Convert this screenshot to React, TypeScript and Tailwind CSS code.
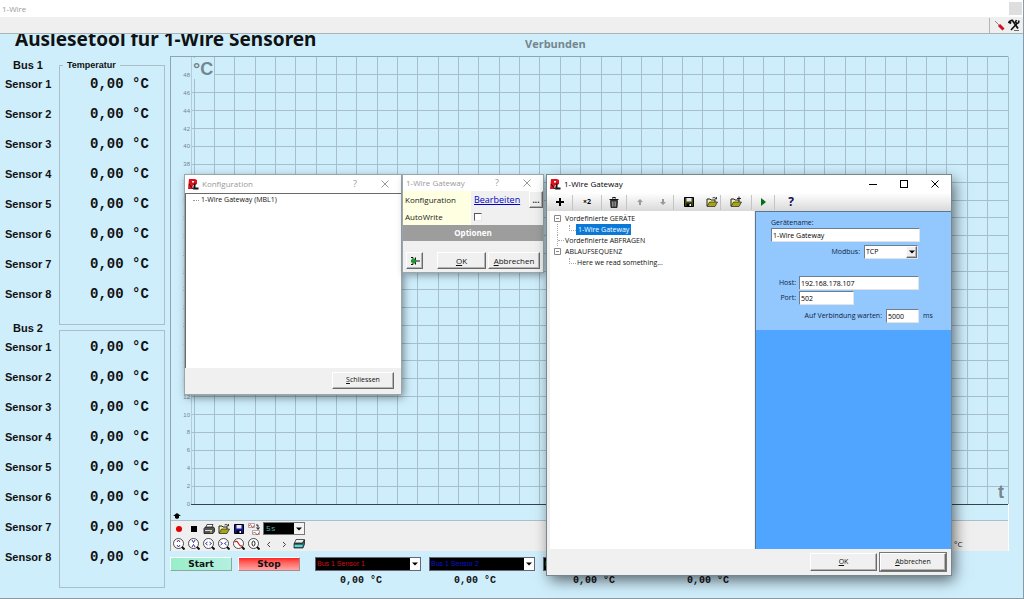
import type { ReactNode } from 'react';

const sensors = [1, 2, 3, 4, 5, 6, 7, 8];
const ticks = Array.from({ length: 25 }, (_, i) => i * 2);
const columns = Array.from({ length: 41 }, (_, i) => i);

const raised =
  'border border-t-white border-l-white border-r-[#696969] border-b-[#696969] bg-[#f0f0f0] shadow-[inset_-1px_-1px_0_#b4b4b4]';
const field =
  'border border-t-[#6c7f92] border-l-[#6c7f92] border-r-[#e3e3e3] border-b-[#e3e3e3] bg-white text-black px-px h-[14px] min-w-0 outline-none';

const Logo = () => (
  <svg viewBox="0 0 12 12" className="w-3 h-3 shrink-0">
    <path d="M2 1h6l2 1v4L8 7H6l-1 4H1z" fill="#e01018" />
    <path d="M5 3h2v1.500H5z" fill="#fff" />
    <path d="M7 5.500h1.500V9.500H11.500V11.500H6z" fill="#151515" />
    <path d="M2 6l4 5" stroke="#151515" strokeWidth="1" />
  </svg>
);

const CloseIcon = () => (
  <svg viewBox="0 0 8 8" className="w-2 h-2" fill="none" stroke="currentColor">
    <path d="M0.500 0.500l7 7M7.500 0.500l-7 7" />
  </svg>
);

const Arrow = () => (
  <svg viewBox="0 0 6 4" className="w-[6px] h-1" fill="#000">
    <path d="M0 0.500h6L3 3.500z" />
  </svg>
);

const Folder = ({ children }: { children?: ReactNode }) => (
  <svg viewBox="0 0 12 12" className="w-3 h-3">
    <path d="M1 10V3h3l1 1h4v2" fill="#f5f0a0" stroke="#222" />
    <path d="M1 10.500L3.500 6h8L9 10.500z" fill="#a8a418" stroke="#222" strokeWidth="0.700" />
    {children ?? <path d="M6.500 2q2-1.500 3.500 0.500M10.500 1v2h-2" fill="none" stroke="#111" strokeWidth="0.800" />}
  </svg>
);

const Floppy = ({ color }: { color: string }) => (
  <svg viewBox="0 0 12 12" className="w-3 h-3">
    <path d="M1.500 1.500h9v9h-9z" fill={color} stroke="#000" />
    <path d="M3.500 2h5v3.500h-5z" fill="#e8e8f0" />
    <path d="M3.500 7.500h5v3h-5z" fill="#000" />
    <path d="M6.500 8h1.500v2H6.500z" fill="#fff" />
  </svg>
);

const Lens = ({ children }: { children: ReactNode }) => (
  <svg viewBox="0 0 12 12" className="w-3 h-3" fill="none">
    <circle cx="5.500" cy="5.500" r="5" fill="#fff" stroke="#222" strokeWidth="0.800" />
    <path d="M9 9l2.500 2.500" stroke="#111" strokeWidth="2" />
    {children}
  </svg>
);

const chartTools = [
  { label: 'Aufnahme', icon: <svg viewBox="0 0 12 12" className="w-3 h-3"><circle cx="6" cy="6" r="3" fill="#e00000" /></svg> },
  { label: 'Anhalten', icon: <svg viewBox="0 0 12 12" className="w-3 h-3"><path d="M3 3h6v6H3z" /></svg> },
  {
    label: 'Drucken',
    icon: (
      <svg viewBox="0 0 12 12" className="w-3 h-3">
        <path d="M4 1.500h6L8.500 5h-6z" fill="#fff" stroke="#222" strokeWidth="0.800" />
        <path d="M1 5.500L2.500 4h8l1 1.500v3L10 10.500H1z" fill="#555" stroke="#111" strokeWidth="0.800" />
        <path d="M2 7.500h7" stroke="#ddd" />
        <path d="M7 9h2" stroke="#d8d830" />
      </svg>
    ),
  },
  { label: 'Laden', icon: <Folder /> },
  { label: 'Speichern', icon: <Floppy color="#1818a0" /> },
  {
    label: 'Kurven',
    icon: (
      <svg viewBox="0 0 12 12" className="w-3 h-3" fill="none">
        <path d="M0.500 0.500h6v4h-6zM4.500 7.500h7v4h-7z" fill="#fff" stroke="#888" strokeWidth="0.700" />
        <path d="M1 3q1.500-3 2.500 0t2.500-0.500M5 10.500q1.500-3 3 0t3-1" stroke="#c02020" strokeWidth="0.800" />
        <path d="M8 2h2v4M8.500 4.500l1.500 2 1.500-2" stroke="#111" strokeWidth="0.900" />
      </svg>
    ),
  },
];

const zoomTools = [
  { label: 'Y vergrößern', icon: <Lens><path d="M4 4l1.500-2L7 4M4 7l1.500 2L7 7" stroke="#2020a0" strokeWidth="0.900" /></Lens> },
  { label: 'Y verkleinern', icon: <Lens><path d="M4 2l1.500 2.500L7 2M4 9l1.500-2.500L7 9" stroke="#2020a0" strokeWidth="0.900" /></Lens> },
  { label: 'X vergrößern', icon: <Lens><path d="M4.500 4L2.500 5.500l2 1.500M6.500 4l2 1.500-2 1.500" stroke="#2020a0" strokeWidth="0.900" /></Lens> },
  { label: 'X verkleinern', icon: <Lens><path d="M2.500 4l2 1.500-2 1.500M8.500 4l-2 1.500 2 1.500" stroke="#2020a0" strokeWidth="0.900" /></Lens> },
  { label: 'Bereich', icon: <Lens><path d="M1.500 4q2-2 4 1.500t3.500 2" stroke="#d02020" strokeWidth="1.200" /></Lens> },
  { label: 'Zurücksetzen', icon: <Lens><ellipse cx="5.500" cy="5.500" rx="1.500" ry="2.500" stroke="#222" /></Lens> },
  { label: 'Zurück', icon: <svg viewBox="0 0 12 12" className="w-3 h-3" fill="none" stroke="#444"><path d="M7 4L4.500 6.500 7 9" /></svg> },
  { label: 'Weiter', icon: <svg viewBox="0 0 12 12" className="w-3 h-3" fill="none" stroke="#444"><path d="M5 4l2.500 2.500L5 9" /></svg> },
  {
    label: 'Löschen',
    icon: (
      <svg viewBox="0 0 12 12" className="w-3 h-3">
        <path d="M3 1.500h8.500L9.500 5h-8z" fill="#eee" stroke="#111" strokeWidth="0.700" />
        <path d="M1 5.500h8.500L11.500 2v4L10 10H1z" fill="#108080" stroke="#111" strokeWidth="0.700" />
        <path d="M1.500 8h8" stroke="#fff" />
      </svg>
    ),
  },
];

const channels = [
  { label: 'Bus 1 Sensor 1', style: 'text-[#d01010]' },
  { label: 'Bus 1 Sensor 2', style: 'text-[#1010d0]' },
  { label: 'Bus 1 Sensor 3', style: 'text-[#10a010]' },
  { label: 'Bus 1 Sensor 4', style: 'text-[#c0c010]' },
];

const SensorNames = ({ bus }: { bus: number }) => (
  <div className="h-[263px]">
    <h2 className="h-[18px] leading-[18px] pl-[13px]">Bus {bus}</h2>
    <ul className="flex flex-col gap-[10px] pl-[5px]">
      {sensors.map((n) => (
        <li key={n} className="h-5 leading-5">Sensor {n}</li>
      ))}
    </ul>
  </div>
);

const SensorValues = () => (
  <ul className="flex flex-col gap-[10px] pl-[30px] font-['Liberation_Mono',monospace] text-[14px] whitespace-pre">
    {sensors.map((n) => (
      <li key={n} className="h-5 leading-5">0,00 °C</li>
    ))}
  </ul>
);

const Chart = () => (
  <div className="flex h-[447px] font-['Liberation_Sans',sans-serif]">
    <svg className="w-[23px] h-full shrink-0 overflow-visible">
      {ticks.map((t) => (
        <text key={t} x="19" y={`${100 - t * 2}%`} dy="2" textAnchor="end" fontSize="6" fill="#71858f">{t}</text>
      ))}
    </svg>
    <svg className="flex-1 h-full overflow-visible" shapeRendering="crispEdges">
      {ticks.map((t) => (
        <line key={t} x1="-3" x2="100%" y1={`${100 - t * 2}%`} y2={`${100 - t * 2}%`} stroke="#a6bfcb" />
      ))}
      {columns.map((c) => (
        <line key={c} x1={`${c * 2.5}%`} x2={`${c * 2.5}%`} y1="0" y2="100%" stroke="#a6bfcb" />
      ))}
      <line x1="-3" x2="-3" y1="0" y2="100%" stroke="#b5cbd6" />
      <line x1="-3" x2="100%" y1="100%" y2="100%" stroke="#34444c" />
      <rect x="-2" y="1" width="22" height="21" fill="#cfeefc" />
      <text x="-1" y="18" fontSize="18" fontWeight="bold" fill="#74868e">°C</text>
      <text x="100%" dx="-10" y="441" fontSize="18" fontWeight="bold" fill="#74868e">t</text>
    </svg>
  </div>
);

const KonfigurationDialog = () => (
  <section className="absolute left-[185px] top-[175px] w-[216px] bg-[#f0f0f0] outline outline-[#9aa6ac] shadow-[2px_3px_9px_rgba(0,0,0,0.5)]">
    <header className="flex items-center h-[18px] bg-white text-[#999] pl-[2px] pr-3">
      <Logo />
      <h2 className="flex-1 pl-[3px] text-[8px]">Konfiguration</h2>
      <button aria-label="Hilfe" className="w-4 mr-[18px] text-[9px]">?</button>
      <button aria-label="Schließen"><CloseIcon /></button>
    </header>
    <ul className="h-[175px] bg-white border-t border-l border-[#696969] pt-px pl-[7px]">
      <li className="flex items-center gap-[2px] h-[11px]">
        <span className="w-[6px] border-t border-dotted border-[#999]" />1-Wire Gateway (MBL1)
      </li>
    </ul>
    <footer className="flex justify-end h-[26px] pt-1 pr-[7px]">
      <button className={`w-[62px] h-[17px] ${raised}`}><u>S</u>chliessen</button>
    </footer>
  </section>
);

const GatewayOptions = () => (
  <section className="absolute left-[403px] top-[175px] w-[140px] bg-[#f0f0f0] outline outline-[#9aa6ac] shadow-[2px_3px_8px_rgba(0,0,0,0.4)] text-[8px]">
    <header className="flex items-center h-4 bg-white text-[#999] pl-[3px] pr-3">
      <h2 className="flex-1">1-Wire Gateway</h2>
      <button aria-label="Hilfe" className="w-4 mr-[18px] text-[9px]">?</button>
      <button aria-label="Schließen"><CloseIcon /></button>
    </header>
    <div className="grid grid-cols-[68px_1fr] leading-[17px] text-[#222]">
      <span className="bg-[#ffffe1] pl-[2px]">Konfiguration</span>
      <span className="flex justify-between pl-[3px]">
        <a href="#bearbeiten" className="text-[#0000c8] underline text-[9px]">Bearbeiten</a>
        <button aria-label="Mehr" className={`w-[14px] h-[17px] leading-[10px] font-bold ${raised}`}>...</button>
      </span>
      <label htmlFor="autowrite" className="bg-[#ffffe1] pl-[2px]">AutoWrite</label>
      <span className="flex items-center pl-[3px]">
        <input id="autowrite" type="checkbox" className="appearance-none w-2 h-2 bg-white border border-t-[#555] border-l-[#555] border-r-[#e8e8e8] border-b-[#e8e8e8]" />
      </span>
    </div>
    <h3 className="h-4 leading-4 bg-[#9d9d9d] text-white text-center font-bold">Optionen</h3>
    <footer className="flex items-center h-[31px] pt-2 px-[3px] gap-[2px]">
      <button aria-label="Eingang" className={`flex items-center justify-center w-[17px] h-[17px] mr-3 ${raised}`}>
        <svg viewBox="0 0 10 10" className="w-[10px] h-[10px]">
          <path d="M1 1.500h2v7H1M5.500 1.500v7M5.500 5H10" fill="none" stroke="#111" />
          <path d="M1 3.500h3V2l3 3-3 3V6.500H1z" fill="#10a020" />
        </svg>
      </button>
      <button className={`flex-1 h-[17px] ${raised}`}><u>O</u>K</button>
      <button className={`w-[52px] h-[17px] whitespace-nowrap ${raised}`}><u>A</u>bbrechen</button>
    </footer>
  </section>
);

const Separator = () => <span className="w-px h-[15px] bg-[#c4c4c4]" />;

const TreeBox = () => (
  <svg viewBox="0 0 7 7" className="w-[7px] h-[7px] shrink-0" fill="#fff" stroke="#888">
    <path d="M0.500 0.500h6v6h-6zM2 3.500h3" />
  </svg>
);

const GatewayToolbar = () => (
  <div className="flex items-center h-[18px] bg-linear-to-b from-white to-[#d9d9d9] text-black">
    <button aria-label="Hinzufügen" className="flex justify-center w-[25px]">
      <svg viewBox="0 0 10 10" className="w-[10px] h-[10px]" stroke="#000" strokeWidth="2"><path d="M5 1v8M1 5h8" /></svg>
    </button>
    <Separator />
    <button className="w-[28px] font-bold">×2</button>
    <Separator />
    <button aria-label="Löschen" className="flex justify-center w-[24px]">
      <svg viewBox="0 0 12 12" className="w-3 h-3">
        <path d="M2.500 4.500h7L9 11.500H3z" fill="#444" stroke="#111" strokeWidth="0.800" />
        <path d="M4.500 5.500v5M6 5.500v5M7.500 5.500v5" stroke="#bbb" strokeWidth="0.600" />
        <path d="M1.500 3.500h9M4.500 2.500l0.500-1h2l0.500 1" fill="none" stroke="#111" strokeWidth="1.200" />
      </svg>
    </button>
    <Separator />
    <button aria-label="Nach oben" className="flex justify-center w-[26px]">
      <svg viewBox="0 0 6 6" className="w-[6px] h-[6px]" fill="#999"><path d="M3 0l3 3H4v3H2V3H0z" /></svg>
    </button>
    <button aria-label="Nach unten" className="flex justify-center w-[20px]">
      <svg viewBox="0 0 6 6" className="w-[6px] h-[6px]" fill="#999"><path d="M3 6l3-3H4V0H2v3H0z" /></svg>
    </button>
    <Separator />
    <button aria-label="Speichern" className="flex justify-center w-[30px]"><Floppy color="#4a4a10" /></button>
    <button aria-label="Öffnen" className="flex justify-center w-4"><Folder /></button>
    <Separator />
    <button aria-label="Importieren" className="flex justify-center w-[30px]">
      <Folder><path d="M9 0.500v4M7 2.500h4" stroke="#111" strokeWidth="0.900" /></Folder>
    </button>
    <Separator />
    <button aria-label="Ausführen" className="flex justify-center w-[22px]">
      <svg viewBox="0 0 8 8" className="w-2 h-2"><path d="M2 0l5 4-5 4z" fill="#007010" /></svg>
    </button>
    <Separator />
    <button aria-label="Hilfe" className="w-8 text-[12px] font-bold text-[#101060]">?</button>
  </div>
);

const GatewayTree = () => (
  <ul className="w-[204px] pt-[2px] pl-1 bg-white leading-[11px] whitespace-nowrap">
    <li>
      <span className="flex items-center gap-1"><TreeBox />Vordefinierte GERÄTE</span>
      <ul className="ml-[3px] pl-[11px] border-l border-dotted border-[#aaa]">
        <li className="flex items-center">
          <span className="w-[7px] h-[6px] mb-1 border-l border-b border-dotted border-[#aaa]" />
          <span className="px-[2px] bg-[#0a78d7] text-white">1-Wire Gateway</span>
        </li>
      </ul>
    </li>
    <li className="flex items-center ml-[3px] border-l border-dotted border-[#aaa]">
      <span className="w-[6px] mr-px border-t border-dotted border-[#aaa]" />Vordefinierte ABFRAGEN
    </li>
    <li>
      <span className="flex items-center gap-1"><TreeBox />ABLAUFSEQUENZ</span>
      <ul className="pl-[15px]">
        <li className="flex items-center gap-px">
          <span className="w-[7px] h-[6px] mb-1 border-l border-b border-dotted border-[#aaa]" />Here we read something...
        </li>
      </ul>
    </li>
  </ul>
);

const GatewayForm = () => (
  <form className="flex-1 flex flex-col bg-[#4fa5ff] border-l border-t border-[#5b7690] text-[#10243c]">
    <div className="h-[118px] bg-[#93c8ff] pt-[6px] pl-[15px]">
      <label htmlFor="name" className="block h-[10px] leading-[10px]">Gerätename:</label>
      <input id="name" defaultValue="1-Wire Gateway" className={`block w-[149px] ${field}`} />
      <div className="flex items-center justify-end gap-1 w-[147px] mt-[3px]">
        <label htmlFor="modbus">Modbus:</label>
        <span className="relative">
          <select id="modbus" className={`appearance-none block w-[54px] ${field}`}>
            <option>TCP</option>
            <option>RTU</option>
          </select>
          <span className={`absolute right-px top-px flex items-center justify-center w-[11px] h-3 pointer-events-none ${raised}`}><Arrow /></span>
        </span>
      </div>
      <div className="grid grid-cols-[25px_1fr] items-center gap-x-[3px] gap-y-px w-[148px] mt-[17px]">
        <label htmlFor="host" className="text-right">Host:</label>
        <input id="host" defaultValue="192.168.178.107" className={field} />
        <label htmlFor="port" className="text-right">Port:</label>
        <input id="port" defaultValue="502" className={`w-[55px] ${field}`} />
      </div>
      <div className="flex items-center gap-1 mt-1 pl-[33px]">
        <label htmlFor="wait" className="flex-none whitespace-nowrap w-[78px] text-right">Auf Verbindung warten:</label>
        <input id="wait" defaultValue="5000" className={`w-[33px] ${field}`} />
        <span>ms</span>
      </div>
    </div>
  </form>
);

const GatewayDialog = () => (
  <section className="absolute left-[547px] top-[175px] w-[404px] bg-[#f0f0f0] outline outline-[#78868e] shadow-[3px_5px_14px_rgba(0,0,0,0.6)]">
    <header className="flex items-center h-[18px] bg-white text-black pl-[2px] pr-3">
      <Logo />
      <h2 className="flex-1 pl-[3px] text-[8px]">1-Wire Gateway</h2>
      <div className="flex items-center gap-[23px]">
        <button aria-label="Minimieren" className="w-2 h-px bg-black" />
        <button aria-label="Maximieren" className="w-2 h-2 border border-black" />
        <button aria-label="Schließen"><CloseIcon /></button>
      </div>
    </header>
    <GatewayToolbar />
    <div className="flex h-[338px] gap-px pl-[3px]">
      <GatewayTree />
      <GatewayForm />
    </div>
    <footer className="flex justify-end gap-[3px] pt-1 pb-1 pr-[5px]">
      <button className={`w-[67px] h-[18px] ${raised}`}><u>O</u>K</button>
      <button className={`w-[66px] h-[18px] outline outline-[#777] ${raised}`}><u>A</u>bbrechen</button>
    </footer>
  </section>
);

const App = () => (
  <div className="relative flex flex-col min-h-screen bg-[#cfeefc] border-b border-r border-[#8a9ba4] font-['Open_Sans','Noto_Sans',sans-serif] text-[7px] text-[#111] overflow-hidden">
    <header className="flex items-center justify-between h-[17px] bg-white text-[#999] text-[8px] pl-[2px] pr-px">
      <h1>1-Wire</h1>
      <button aria-label="Schließen" className="w-[13px] h-[13px] bg-[#dedede]" />
    </header>
    <div className="flex justify-end items-center gap-[3px] h-[17px] bg-[#efefef] border-b border-[#a8b4ba] pr-[3px]">
      <span className="w-px h-[15px] bg-[#b4b4b4]" />
      <button aria-label="Werkzeug">
        <svg viewBox="0 0 12 12" className="w-3 h-3" fill="none">
          <path d="M2 2l4 4" stroke="#888" />
          <path d="M6 6l4.500 4.500" stroke="#d01020" strokeWidth="3" />
        </svg>
      </button>
      <button aria-label="Einstellungen">
        <svg viewBox="0 0 12 12" className="w-3 h-3" fill="none" stroke="#111">
          <path d="M0.500 4q1.500-3 4-2.500l5.500 8M1 2.500l2 2" strokeWidth="1.800" />
          <path d="M10.500 1.500q1 2.500-1.500 3L3 11M8.500 1l-1 2 1.500 1.500" strokeWidth="1.600" />
          <path d="M6 11.500h5" strokeWidth="0.600" />
        </svg>
      </button>
    </div>

    <div className="flex h-[22px] overflow-hidden font-bold">
      <h1 className="w-[525px] pl-[15px] -mt-[9px] text-[19px] leading-7 whitespace-nowrap font-['Noto_Sans',sans-serif]">Auslesetool für 1-Wire Sensoren</h1>
      <p className="text-[11px] leading-5 text-[#74868e] font-['Open_Sans',sans-serif]">Verbunden</p>
    </div>

    <div className="flex">
      <aside className="flex w-[170px] shrink-0 font-bold font-['Liberation_Sans',sans-serif] text-[11px] whitespace-nowrap">
        <div className="w-[59px]">
          <SensorNames bus={1} />
          <SensorNames bus={2} />
        </div>
        <div className="w-[106px]">
          <fieldset className="h-[269px] border border-[#a9bfca]">
            <legend className="h-[18px] leading-[18px] ml-[3px] px-1 text-[9px]">Temperatur</legend>
            <SensorValues />
          </fieldset>
          <fieldset className="h-[258px] mt-[5px] pt-[6px] border border-[#a9bfca]">
            <SensorValues />
          </fieldset>
        </div>
      </aside>

      <main className="flex-1 min-w-0 pr-[14px]">
        <div className="border-t border-l border-r border-t-[#8fa5b0] border-l-[#8fa5b0] border-r-white">
          <Chart />
          <div className="h-4 pt-[9px] pl-[2px]">
            <svg viewBox="0 0 8 6" className="w-2 h-[6px]"><path d="M4 0l4 3H6v2l-2 1-2-1V3H0z" /></svg>
          </div>
          <div className="flex justify-between h-[31px] bg-[#efefef] border-t border-[#a9bfca]">
            <div>
              <div className="flex items-center gap-[3px] h-[15px] pl-[2px]">
                {chartTools.map((tool) => (
                  <button key={tool.label} aria-label={tool.label}>{tool.icon}</button>
                ))}
                <span className="relative">
                  <select aria-label="Intervall" className="appearance-none block w-[42px] h-[13px] bg-black text-[#58b0a8] border border-[#777] px-[2px] text-[8px] font-['Liberation_Mono',monospace]">
                    <option>5s</option>
                    <option>10s</option>
                  </select>
                  <span className="absolute right-px top-px flex items-center justify-center w-[10px] h-[11px] bg-[#f4f4f4] pointer-events-none"><Arrow /></span>
                </span>
              </div>
              <div className="flex items-center gap-[3px] h-[15px] pl-[2px]">
                {zoomTools.map((tool) => (
                  <button key={tool.label} aria-label={tool.label}>{tool.icon}</button>
                ))}
              </div>
            </div>
            <span className="self-end w-[54px] h-[13px] text-[8px] text-[#222]">°C</span>
          </div>
        </div>

        <div className="flex items-start pt-[6px]">
          <button className="w-[62px] h-[14px] mr-[6px] border border-t-white border-l-white border-r-[#8aa89c] border-b-[#8aa89c] bg-linear-to-r from-[#98eec8] to-[#b4f0e0] font-bold text-[9px] leading-3 font-['DejaVu_Sans',sans-serif]">Start</button>
          <button className="w-[62px] h-[14px] mr-[15px] border border-t-white border-l-white border-r-[#a88a8a] border-b-[#a88a8a] bg-linear-to-b from-[#ff1c24] to-[#ffa4a8] font-bold text-[9px] leading-3 font-['DejaVu_Sans',sans-serif]">Stop</button>
          <div>
            <div className="flex gap-2">
              {channels.map((channel) => (
                <span key={channel.label} className="relative">
                  <select aria-label={channel.label} className={`appearance-none block w-[106px] h-[14px] bg-black border border-[#667] px-px text-[7px] font-['Liberation_Sans',sans-serif] ${channel.style}`}>
                    <option>{channel.label}</option>
                  </select>
                  <span className="absolute right-px top-px flex items-center justify-center w-[10px] h-3 bg-white pointer-events-none"><Arrow /></span>
                </span>
              ))}
            </div>
            <div className="grid grid-cols-[114px_119px_114px_114px] pl-[25px] pt-1 font-bold text-[10px] leading-3 whitespace-pre font-['Liberation_Mono',monospace]">
              {channels.map((channel) => (
                <output key={channel.label}>0,00 °C</output>
              ))}
            </div>
          </div>
        </div>
      </main>
    </div>

    <KonfigurationDialog />
    <GatewayOptions />
    <GatewayDialog />
  </div>
);

export default App;
